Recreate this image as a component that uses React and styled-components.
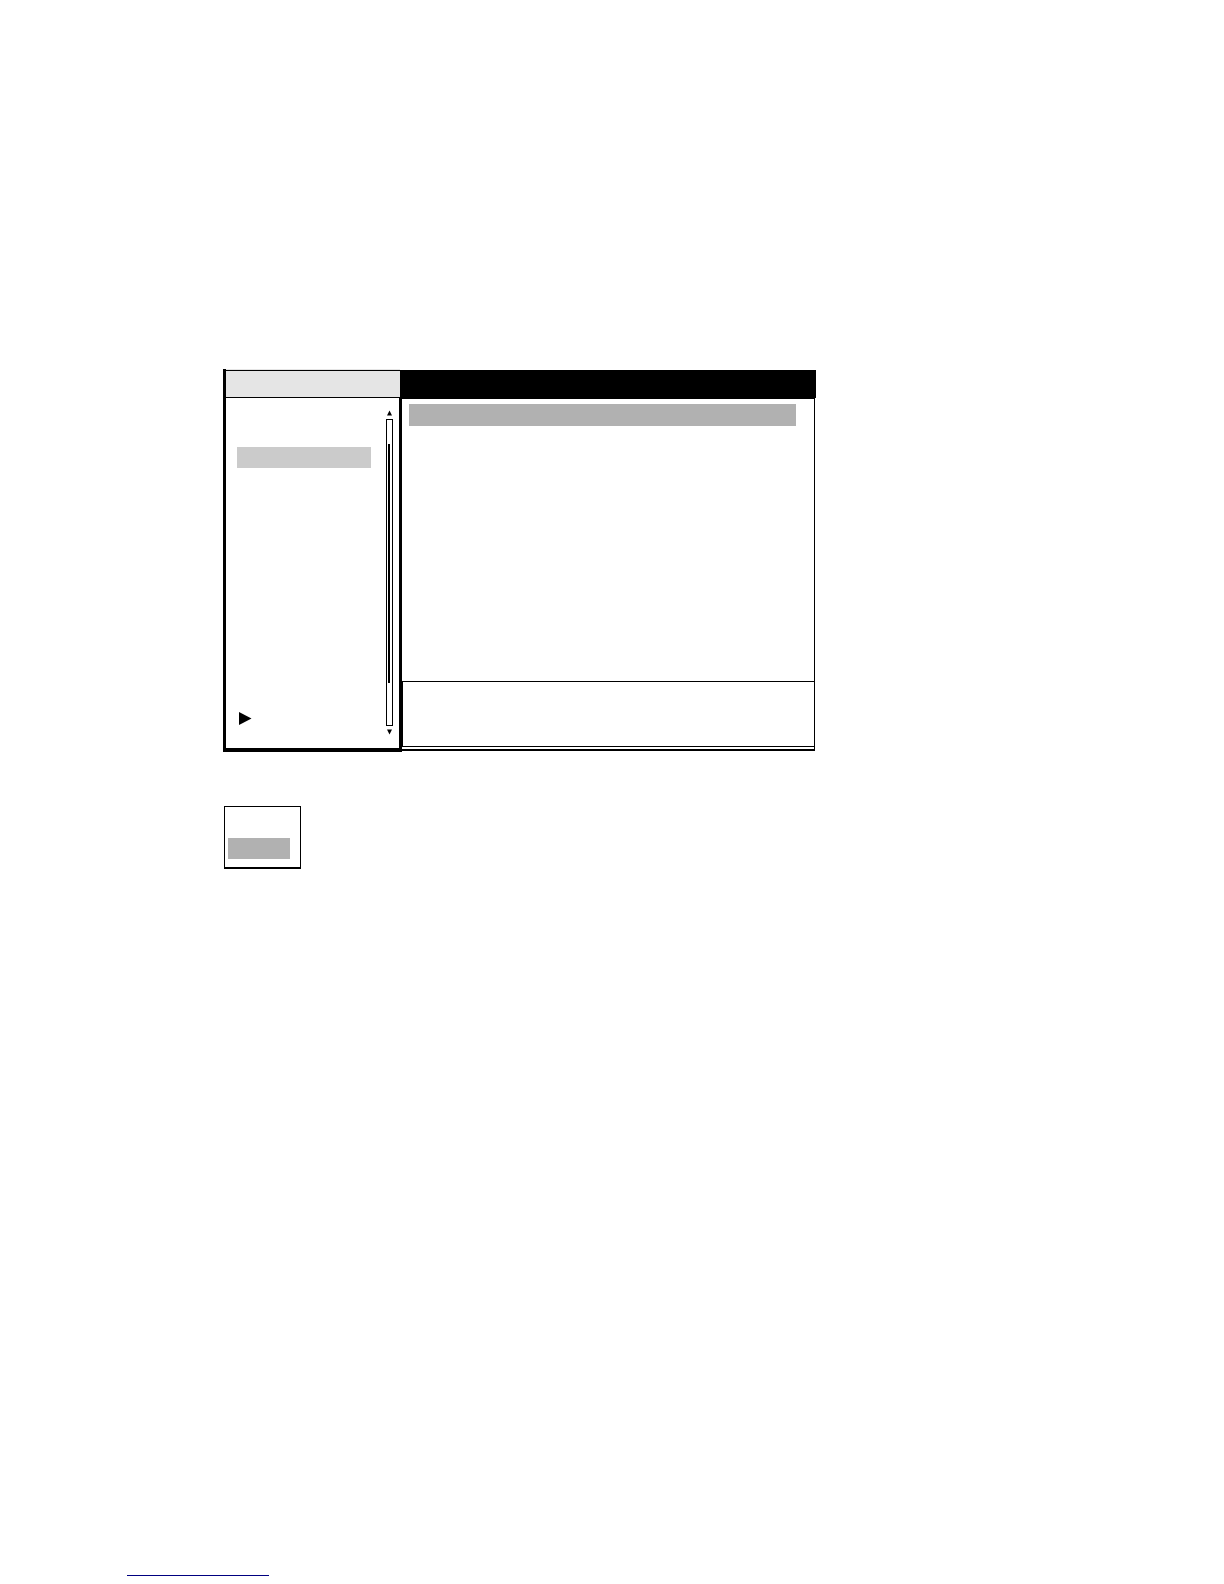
import { useState } from "react";
import styled, { createGlobalStyle } from "styled-components";

export default function App() {
  const [selected, setSelected] = useState("");

  return (
    <>
      <GlobalStyle />
      <Page>
        <Window>
          <TitleRow>
            <SidebarTitle>
              <TitleFill />
            </SidebarTitle>
            <MainTitle />
          </TitleRow>
          <Body>
            <Sidebar aria-label="Topics">
              <Topics>
                <Row
                  type="button"
                  aria-label="Topic"
                  $color="#cbcbcb"
                  onClick={() => setSelected("topic")}
                />
                <MoreButton type="button" aria-label="More topics">
                  <svg width="13" height="13" viewBox="0 0 13 13">
                    <path d="M0 0L12.5 6.5L0 13Z" />
                  </svg>
                </MoreButton>
              </Topics>
              <Scroller>
                <ArrowButton type="button" aria-label="Scroll up">
                  <svg width="7" height="6" viewBox="0 0 7 6">
                    <path d="M3.5 0.5L6 5.5H1Z" />
                  </svg>
                </ArrowButton>
                <Track>
                  <Thumb />
                </Track>
                <ArrowButton type="button" aria-label="Scroll down">
                  <svg width="7" height="6" viewBox="0 0 7 6">
                    <path d="M1 0.5H6L3.5 5.5Z" />
                  </svg>
                </ArrowButton>
              </Scroller>
            </Sidebar>
            <Main>
              <Settings>
                <Row
                  type="button"
                  aria-label="Setting"
                  $color="#b1b1b1"
                  $tall
                  onClick={() => setSelected("setting")}
                />
              </Settings>
              <Info aria-live="polite" data-selected={selected} />
            </Main>
          </Body>
        </Window>
        <Options>
          <Row
            type="button"
            aria-label="Option"
            $color="#b1b1b1"
            onClick={() => setSelected("option")}
          />
        </Options>
        <FooterLink href="#top" aria-label="Back to top" />
      </Page>
    </>
  );
}

const GlobalStyle = createGlobalStyle`
  * {
    box-sizing: border-box;
  }
  body {
    margin: 0;
    background: #fff;
    font-family: "Liberation Sans", sans-serif;
  }
  svg {
    display: block;
  }
`;

const Page = styled.div`
  display: flex;
  flex-direction: column;
  min-height: 100vh;
  padding: 369px 24px 8px 127px;
`;

const Window = styled.section`
  width: 100%;
  max-width: 689px;
  padding-left: 96px;
`;

const TitleRow = styled.header`
  display: flex;
  align-items: flex-end;
`;

const SidebarTitle = styled.div`
  flex: 0 0 177px;
  padding-top: 1px;
  border-left: 3px solid #000;
  background: #e5e5e5;
`;

const TitleFill = styled.div`
  height: 28px;
  border-top: 1px solid #000;
  border-bottom: 1px solid #000;
`;

const MainTitle = styled.div`
  flex: 1;
  height: 28px;
  background: #000;
`;

const Body = styled.div`
  display: flex;
  min-height: 354px;
  padding-right: 1px;
`;

const Sidebar = styled.nav`
  display: flex;
  flex: 0 0 179px;
  justify-content: space-between;
  padding-right: 6px;
  border: solid #000;
  border-width: 0 3px 4px;
`;

const Topics = styled.div`
  display: flex;
  flex-direction: column;
  justify-content: space-between;
  width: 145px;
  padding: 49px 0 23px 11px;
`;

const Row = styled.button`
  display: block;
  width: 100%;
  height: ${({ $tall }) => ($tall ? "22px" : "21px")};
  padding: 0;
  border: 0;
  background: ${({ $color }) => $color};
  cursor: pointer;
`;

const MoreButton = styled.button`
  align-self: flex-start;
  padding: 0 2px;
  border: 0;
  background: none;
  cursor: pointer;
`;

const Scroller = styled.div`
  display: flex;
  flex-direction: column;
  gap: 3px;
  padding: 12px 0 13px;
`;

const ArrowButton = styled.button`
  padding: 0;
  border: 0;
  background: none;
  cursor: pointer;
`;

const Track = styled.div`
  display: flex;
  flex: 1;
  justify-content: flex-start;
  width: 7px;
  padding: 24px 1px 42px;
  border: 1px solid #000;
`;

const Thumb = styled.div`
  width: 2px;
  background: #000;
`;

const Main = styled.main`
  display: flex;
  flex: 1;
  flex-direction: column;
  margin-bottom: 1px;
  padding-bottom: 2px;
  border: solid #000;
  border-width: 1px 1px 2px 0;
`;

const Settings = styled.div`
  flex: 1;
  padding: 5px 18px 5px 7px;
`;

const Info = styled.div`
  height: 66px;
  border: solid #000;
  border-width: 1px 0 1px 1px;
`;

const Options = styled.div`
  width: 77px;
  margin: 54px 0 0 97px;
  padding: 31px 10px 8px 3px;
  border: solid #000;
  border-width: 1px 1px 2px;
`;

const FooterLink = styled.a`
  width: 142px;
  height: 16px;
  margin-top: auto;
  border-bottom: 1px solid #000080;
`;
